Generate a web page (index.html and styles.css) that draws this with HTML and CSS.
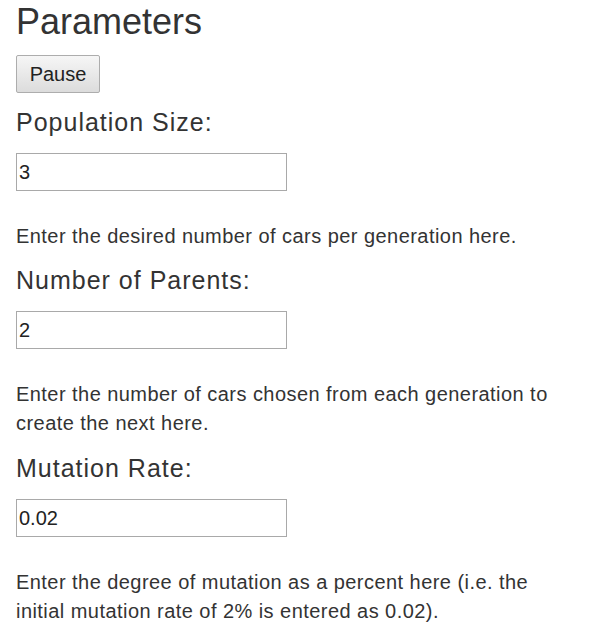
FILE: index.html
```html
<!DOCTYPE html>
<html>
<head>
<meta charset="utf-8">
<title>Parameters</title>
<link rel="stylesheet" href="styles.css">
</head>
<body>
<div class="container">
  <h1 class="title">Parameters</h1>
  <button class="btn" type="button">Pause</button>
  <div class="field">
    <h3 class="label">Population Size:</h3>
    <input class="input" type="text" value="3">
    <p class="help">Enter the desired number of cars per generation here.</p>
  </div>
  <div class="field">
    <h3 class="label">Number of Parents:</h3>
    <input class="input" type="text" value="2">
    <p class="help">Enter the number of cars chosen from each generation to create the next here.</p>
  </div>
  <div class="field">
    <h3 class="label">Mutation Rate:</h3>
    <input class="input" type="text" value="0.02">
    <p class="help">Enter the degree of mutation as a percent here (i.e. the initial mutation rate of 2% is entered as 0.02).</p>
  </div>
</div>
</body>
</html>
```

FILE: styles.css
```css
html, body {
  margin: 0;
  padding: 0;
  background: #ffffff;
}

body {
  font-family: "Liberation Sans", Arial, sans-serif;
  color: #333333;
}

.container {
  padding: 2px 44px 0 16px;
  display: flex;
  flex-direction: column;
  align-items: flex-start;
}

.title {
  font-size: 36px;
  line-height: 40px;
  font-weight: normal;
  margin: 0 0 13px 0;
}

.btn {
  margin: 0;
  width: 84px;
  height: 38px;
  padding: 0;
  font-family: "Liberation Sans", Arial, sans-serif;
  font-size: 20px;
  line-height: 24px;
  color: #222222;
  background: linear-gradient(#f6f6f6, #dcdcdc);
  border: 1px solid #adadad;
  border-radius: 2px;
}

.field {
  display: flex;
  flex-direction: column;
  align-items: flex-start;
  width: 100%;
}

.label {
  font-size: 25px;
  line-height: 30px;
  font-weight: normal;
  letter-spacing: 1px;
  margin: 14px 0 0 0;
}

.field + .field .label {
  margin-top: 14px;
}

.field + .field + .field .label {
  margin-top: 15px;
}

.input {
  box-sizing: border-box;
  margin: 16px 0 0 0;
  width: 271px;
  height: 38px;
  padding: 0 2px;
  font-family: "Liberation Sans", Arial, sans-serif;
  font-size: 20px;
  color: #222222;
  border: 1px solid #a9a9a9;
  border-radius: 0;
  background: #ffffff;
}

.help {
  font-size: 20px;
  line-height: 29px;
  letter-spacing: 0.45px;
  margin: 31px 0 0 0;
}
```
